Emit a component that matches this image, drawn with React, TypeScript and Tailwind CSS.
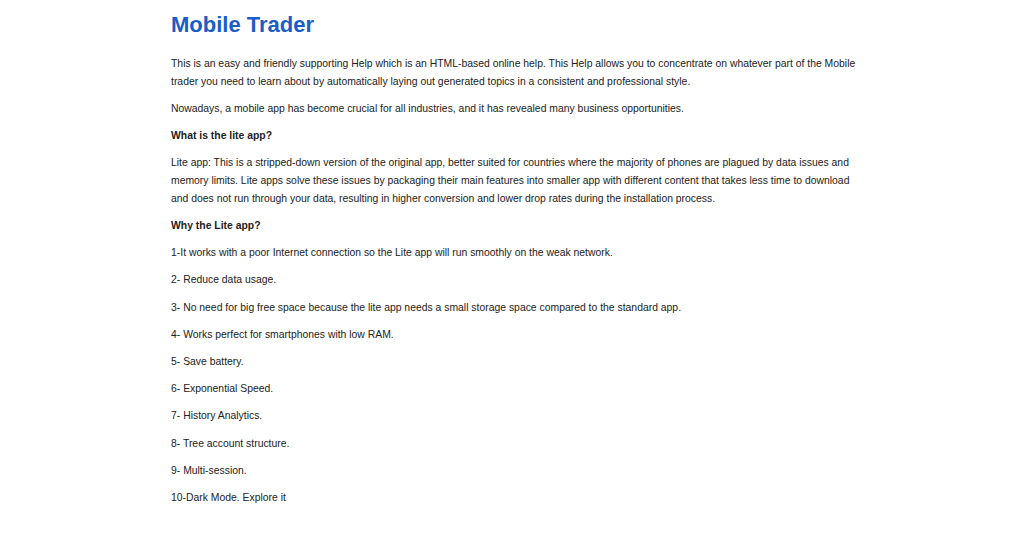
import React from 'react';

export default function App() {
  const reasons = [
    '1-It works with a poor Internet connection so the Lite app will run smoothly on the weak network.',
    '2- Reduce data usage.',
    '3- No need for big free space because the lite app needs a small storage space compared to the standard app.',
    '4- Works perfect for smartphones with low RAM.',
    '5- Save battery.',
    '6- Exponential Speed.',
    '7- History Analytics.',
    '8- Tree account structure.',
    '9- Multi-session.',
    '10-Dark Mode. Explore it',
  ];

  return (
    <div className="min-h-screen bg-white font-['Liberation_Sans',Arial,sans-serif] text-[#222]">
      <div className="w-[690px] ml-[171px] pt-[11px]">
        <h1 className="text-[22px] leading-[28px] font-bold text-[#1a5dc8] mb-[16px]">Mobile Trader</h1>

        <div className="text-[10.4px] leading-[17.7px] space-y-[9.5px]">
          <p>
            This is an easy and friendly supporting Help which is an HTML-based online help. This Help allows you to
            concentrate on whatever part of the Mobile trader you need to learn about by automatically laying out
            generated topics in a consistent and professional style.
          </p>
          <p>Nowadays, a mobile app has become crucial for all industries, and it has revealed many business opportunities.</p>
          <p className="font-bold">What is the lite app?</p>
          <p>
            Lite app: This is a stripped-down version of the original app, better suited for countries where the majority
            of phones are plagued by data issues and memory limits. Lite apps solve these issues by packaging their main
            features into smaller app with different content that takes less time to download and does not run through
            your data, resulting in higher conversion and lower drop rates during the installation process.
          </p>
          <p className="font-bold">Why the Lite app?</p>
          {reasons.map((r) => (
            <p key={r}>{r}</p>
          ))}
        </div>
      </div>
    </div>
  );
}
